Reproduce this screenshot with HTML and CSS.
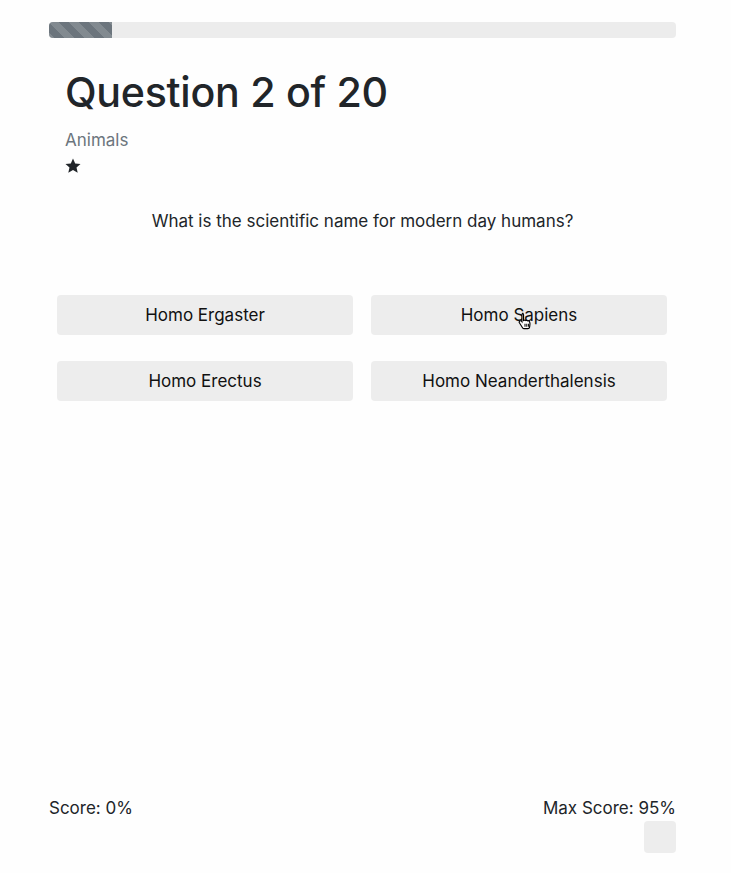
FILE: index.html
```html
<!DOCTYPE html>
<html>
<head>
<meta charset="utf-8">
<link rel="stylesheet" href="styles.css">
</head>
<body>
<div class="page">
  <div class="progress"><div class="progress-bar" style="width:10%"></div></div>
  <div class="head">
    <h1 class="title">Question 2 of 20</h1>
    <div class="category">Animals</div>
    <svg class="star" viewBox="0 0 16 16" width="16" height="16"><path d="M8 .6l2.2 4.9 5.3.5-4 3.6 1.2 5.2L8 12.1 3.3 14.8l1.2-5.2-4-3.6 5.3-.5z" fill="#212529"/></svg>
  </div>
  <p class="question">What is the scientific name for modern day humans?</p>
  <div class="answers">
    <button class="answer">Homo Ergaster</button>
    <button class="answer answer-hover">Homo Sapiens
      <svg class="cursor" viewBox="0 0 14 16" width="16" height="18"><path d="M4.5 1.2c.7 0 1.2.5 1.2 1.2v5.2l.4-.1c.5-.5 1.3-.4 1.7.1.5-.3 1.2-.2 1.6.3.5-.2 1.1 0 1.4.4l.3.6c.3.7.4 1.4.3 2.1l-.3 2.4c-.1.8-.8 1.4-1.6 1.4H6.2c-.6 0-1.1-.3-1.4-.8L2 9.6c-.4-.6-.2-1.3.4-1.6.5-.3 1.1-.2 1.5.2l.4.5V2.4c0-.7.5-1.2 1.2-1.2z" fill="#fff" stroke="#000" stroke-width="1"/><path d="M7 10.5v2.5M8.6 10.5v2.5M10.2 10.5v2.5" stroke="#000" stroke-width=".9"/></svg>
    </button>
    <button class="answer">Homo Erectus</button>
    <button class="answer">Homo Neanderthalensis</button>
  </div>
  <div class="spacer"></div>
  <div class="footer">
    <div class="score">Score: 0%</div>
    <div class="max">
      <div>Max Score: 95%</div>
      <div class="box"></div>
    </div>
  </div>
</div>
</body>
</html>
```
FILE: styles.css
```css
html, body {
  margin: 0;
  padding: 0;
  background: #fefefe;
}
body {
  font-family: Inter, "Noto Sans", sans-serif;
  color: #212529;
  font-size: 17px;
}
.page {
  width: 627px;
  margin-left: 49px;
  padding-top: 22px;
  height: 831px;
  display: flex;
  flex-direction: column;
}
.progress {
  height: 16px;
  background: #ececec;
  border-radius: 4px;
  overflow: hidden;
}
.progress-bar {
  height: 100%;
  background-color: #6c757d;
  background-image: linear-gradient(45deg, rgba(255,255,255,.15) 25%, transparent 25%, transparent 50%, rgba(255,255,255,.15) 50%, rgba(255,255,255,.15) 75%, transparent 75%, transparent);
  background-size: 20px 20px;
}
.head {
  padding: 0 16px;
}
.title {
  margin: 30px 0 0;
  font-size: 41.2px;
  font-weight: 500;
  line-height: 1.2;
  letter-spacing: -0.3px;
}
.category {
  margin-top: 12px;
  color: #6c757d;
  font-size: 17px;
  line-height: 22px;
}
.star {
  display: block;
  margin-top: 7px;
}
.question {
  margin: 35px 0 0;
  text-align: center;
  line-height: 24px;
}
.answers {
  margin: 62px 9px 0 8px;
  display: grid;
  grid-template-columns: 1fr 1fr;
  column-gap: 18px;
  row-gap: 26px;
}
.answer {
  position: relative;
  height: 40px;
  border: none;
  border-radius: 4px;
  background: #ededed;
  font-family: inherit;
  font-size: 17px;
  color: #111;
  padding: 0;
}
.cursor {
  position: absolute;
  left: 146px;
  top: 17px;
}
.spacer {
  flex: 1;
}
.footer {
  display: flex;
  justify-content: space-between;
  align-items: flex-start;
  line-height: 22px;
}
.max {
  display: flex;
  flex-direction: column;
  align-items: flex-end;
}
.box {
  margin-top: 2px;
  width: 32px;
  height: 32px;
  border-radius: 4px;
  background: #ededed;
}
```
